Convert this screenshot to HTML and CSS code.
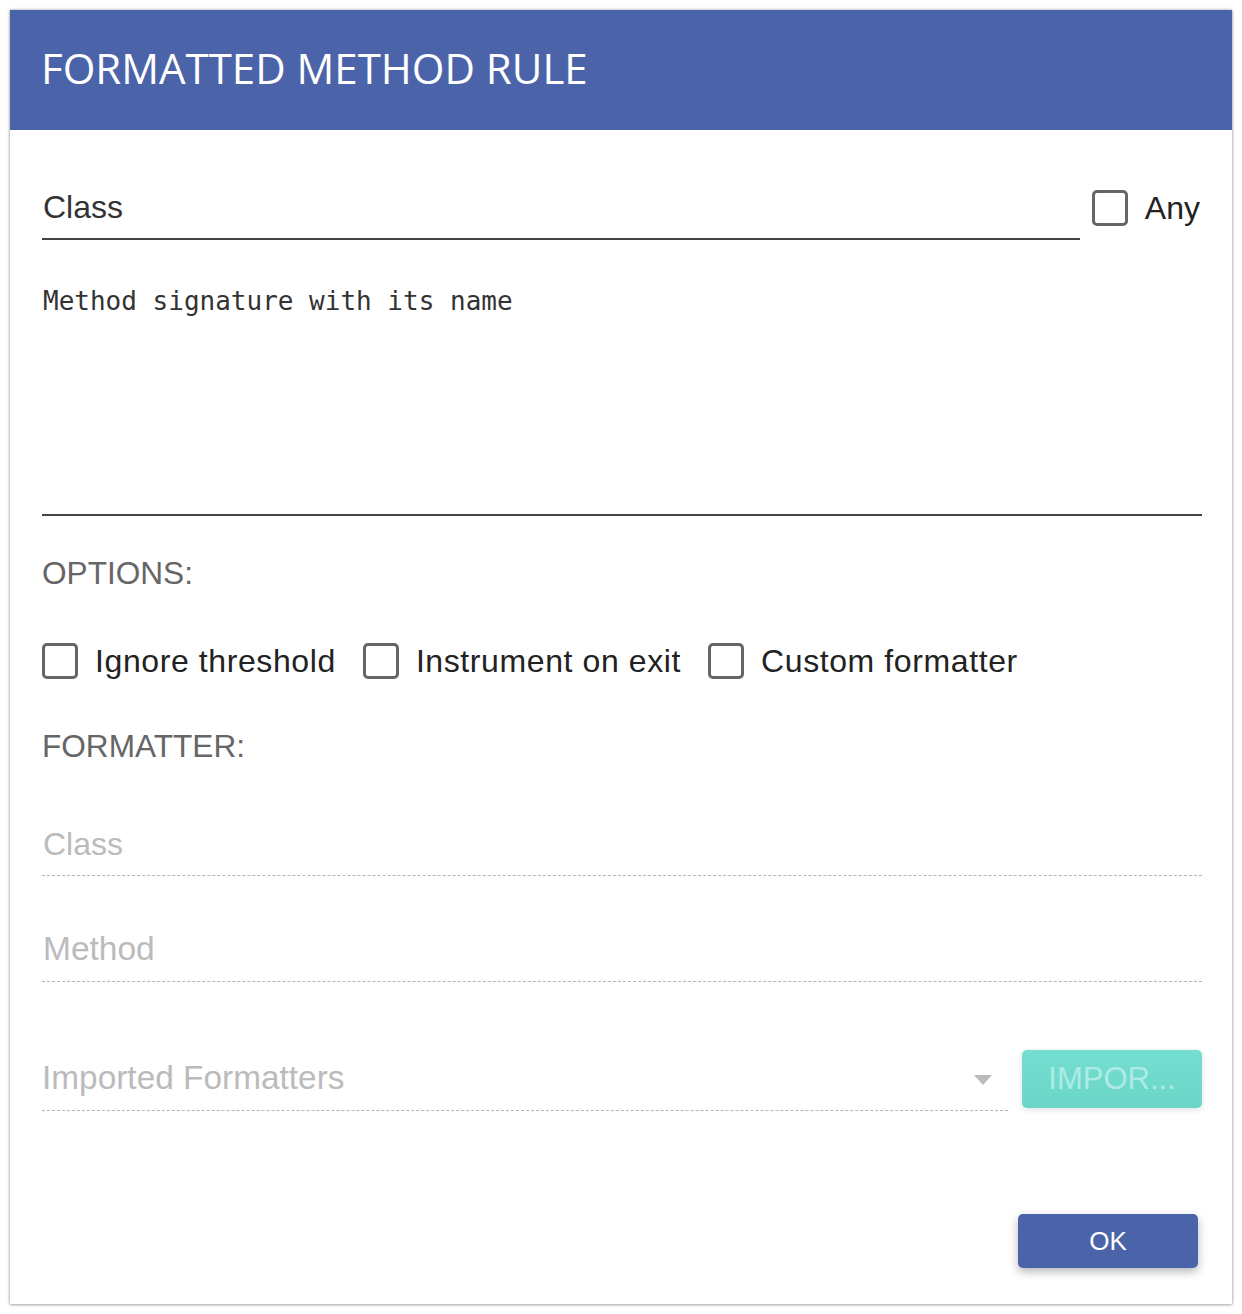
FILE: index.html
```html
<!DOCTYPE html>
<html>
<head>
<meta charset="utf-8">
<link rel="stylesheet" href="styles.css">
</head>
<body>
<div class="dialog">
  <div class="header"><h1 class="title">FORMATTED METHOD RULE</h1></div>
  <div class="content">
    <div class="row-class">
      <div class="field field-class"><span class="value">Class</span></div>
      <label class="check check-any"><span class="box"></span><span class="check-label">Any</span></label>
    </div>
    <div class="field field-area"><span class="mono">Method signature with its name</span></div>
    <div class="section section-options">OPTIONS:</div>
    <div class="checks">
      <label class="check"><span class="box"></span><span class="check-label">Ignore threshold</span></label>
      <label class="check"><span class="box"></span><span class="check-label">Instrument on exit</span></label>
      <label class="check"><span class="box"></span><span class="check-label">Custom formatter</span></label>
    </div>
    <div class="section section-formatter">FORMATTER:</div>
    <div class="field disabled field-fclass"><span class="value">Class</span></div>
    <div class="field disabled field-fmethod"><span class="value value-method">Method</span></div>
    <div class="row-import">
      <div class="field disabled field-select"><span class="select-text">Imported Formatters</span><span class="arrow"></span></div>
      <button class="btn btn-import">IMPOR...</button>
    </div>
    <div class="actions"><button class="btn btn-ok">OK</button></div>
  </div>
</div>
</body>
</html>
```
FILE: styles.css
```css
html, body { margin: 0; padding: 0; background: #fff; }
body { font-family: "Liberation Sans", Arial, sans-serif; color: #333; }
.dialog {
  margin: 10px;
  width: 1222px;
  height: 1294px;
  box-sizing: border-box;
  background: #fff;
  box-shadow: 0 0 3px rgba(0,0,0,0.35), 0 1px 3px rgba(0,0,0,0.2);
  display: flex;
  flex-direction: column;
}
.header {
  height: 120px;
  background: #4b64a9;
  display: flex;
  align-items: center;
  padding-left: 31px;
  flex-shrink: 0;
}
.title {
  margin: 0 0 6px 0;
  font-family: "Open Sans", sans-serif;
  font-weight: 400;
  font-size: 42px;
  color: #fff;
}
.content {
  padding: 0 30px 0 32px;
  display: flex;
  flex-direction: column;
}
.row-class { display: flex; align-items: flex-start; }
.field { box-sizing: border-box; }
.value {
  display: block;
  font-size: 32px;
  line-height: 36px;
  padding-left: 1px;
}
.value-method { font-size: 33.5px; }
.field-class {
  flex: 1;
  padding-top: 59px;
  padding-bottom: 13px;
  border-bottom: 2px solid #444;
}
.field-class .value { color: #333; }
.check { display: flex; align-items: center; }
.box {
  width: 36px;
  height: 36px;
  box-sizing: border-box;
  border: 3px solid #666;
  border-radius: 5px;
  flex-shrink: 0;
}
.check-label {
  font-size: 32px;
  letter-spacing: 0.6px;
  line-height: 36px;
  color: #222;
  margin-left: 17px;
}
.check-any { margin-left: 12px; margin-right: 2px; margin-top: 60px; }
.check-any .check-label { letter-spacing: 0; }
.field-area {
  margin-top: 45px;
  height: 231px;
  border-bottom: 2px solid #444;
}
.mono {
  display: block;
  font-family: "DejaVu Sans Mono", monospace;
  font-size: 26px;
  line-height: 32px;
  color: #333;
  padding-left: 1px;
}
.section {
  font-size: 31.6px;
  line-height: 36px;
  color: #666;
}
.section-options { margin-top: 39px; }
.checks { display: flex; margin-top: 52px; height: 36px; }
.checks .check { margin-right: 27px; }
.section-formatter { margin-top: 49px; }
.disabled { border-bottom: 1px dashed #b5b5b5; }
.disabled .value { color: #bbb; }
.field-fclass { margin-top: 62px; padding-bottom: 13px; }
.field-fmethod { margin-top: 55px; padding-bottom: 14px; }
.row-import { display: flex; margin-top: 68px; align-items: flex-start; }
.field-select {
  flex: 1;
  padding-top: 10px;
  padding-bottom: 14px;
  display: flex;
  align-items: center;
}
.select-text {
  flex: 1;
  font-size: 33.4px;
  line-height: 36px;
  color: #bbb;
}
.arrow {
  width: 0;
  height: 0;
  border-left: 9px solid transparent;
  border-right: 9px solid transparent;
  border-top: 10px solid #bbb;
  margin-right: 16px;
  margin-top: 4px;
}
.btn {
  border: 0;
  border-radius: 5px;
  font-family: "Liberation Sans", Arial, sans-serif;
  cursor: pointer;
  padding: 0;
}
.btn-import {
  margin-left: 14px;
  width: 180px;
  height: 58px;
  background: linear-gradient(#74dfd1, #6bd5c8);
  color: #aeebe3;
  font-size: 31px;
  box-shadow: 0 2px 6px rgba(0,0,0,0.12);
}
.actions { display: flex; justify-content: flex-end; margin-top: 103px; padding-right: 4px; }
.btn-ok {
  width: 180px;
  height: 54px;
  background: #4b64a9;
  color: #fff;
  font-size: 26px;
  box-shadow: 0 4px 10px rgba(0,0,0,0.28);
}
```
